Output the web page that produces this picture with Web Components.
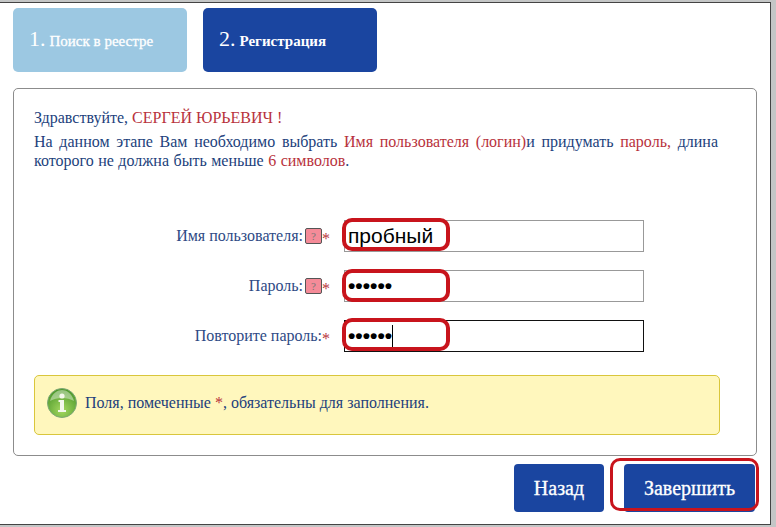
<!DOCTYPE html>
<html>
<head>
<meta charset="utf-8">
<style>
  html, body { margin: 0; height: 100%; background: #fff; overflow: hidden; }
  body { font-family: "Liberation Serif", serif; }
  reg-panel b, info-note b { font-weight: normal; color: #b8323c; }
</style>
</head>
<body>
<reg-window>
  <step-tabs slot="tabs">
    <step-tab num="1." label="Поиск в реестре" light></step-tab>
    <step-tab num="2." label="Регистрация"></step-tab>
  </step-tabs>
  <reg-panel slot="panel">
    <span slot="hello">Здравствуйте, <b>СЕРГЕЙ ЮРЬЕВИЧ !</b></span>
    <span slot="intro" class="fill">На данном этапе Вам необходимо выбрать <b>Имя пользователя (логин)</b>и придумать <b>пароль,</b> длина</span>
    <span slot="intro">которого не должна быть меньше <b>6 символов</b>.</span>
    <form-row slot="rows" label="Имя пользователя:" help value="пробный" marked></form-row>
    <form-row slot="rows" label="Пароль:" help value="••••••" dots marked style="--mark-top:-2px"></form-row>
    <form-row slot="rows" label="Повторите пароль:" value="••••••" dots focused marked></form-row>
    <info-note slot="note">Поля, помеченные <b>*</b>, обязательны для заполнения.</info-note>
  </reg-panel>
  <nav-button slot="nav" label="Назад" style="width:90px"></nav-button>
  <nav-button slot="nav" label="Завершить" marked style="width:131px"></nav-button>
</reg-window>

<script>
class RegWindow extends HTMLElement {
  constructor() {
    super();
    this.attachShadow({ mode: 'open' }).innerHTML = `
      <style>
        :host {
          display: block;
          box-sizing: border-box;
          width: 776px;
          height: 527px;
          padding: 2px 5px 2px 0;
          background: #c4c6c6;
        }
        .win {
          box-sizing: border-box;
          height: 100%;
          padding: 5px 0 0 13px;
          background: #fff;
          border: 1px solid #444;
          border-left: 0;
        }
        .nav { display: flex; justify-content: flex-end; gap: 20px; margin: 8px 15px 0 0; }
      </style>
      <div class="win">
        <slot name="tabs"></slot>
        <slot name="panel"></slot>
        <div class="nav"><slot name="nav"></slot></div>
      </div>`;
  }
}

class StepTabs extends HTMLElement {
  constructor() {
    super();
    this.attachShadow({ mode: 'open' }).innerHTML = `
      <style>:host { display: flex; gap: 16px; margin-bottom: 16px; }</style>
      <slot></slot>`;
  }
}

class StepTab extends HTMLElement {
  constructor() {
    super();
    this.attachShadow({ mode: 'open' }).innerHTML = `
      <style>
        :host {
          display: flex;
          align-items: baseline;
          box-sizing: border-box;
          width: 174px;
          height: 64px;
          padding: 18px 0 0 16px;
          border-radius: 5px;
          background: #1a45a0;
          color: #fff;
        }
        :host([light]) { background: #9cc8e2; }
        .num { font-size: 22px; margin-right: 4px; }
        .label { font-size: 15px; font-weight: bold; }
        :host([light]) .label { font-weight: normal; -webkit-text-stroke: .3px #fff; }
      </style>
      <span class="num">${this.getAttribute('num')}</span>
      <span class="label">${this.getAttribute('label')}</span>`;
  }
}

class RegPanel extends HTMLElement {
  constructor() {
    super();
    this.attachShadow({ mode: 'open' }).innerHTML = `
      <style>
        :host {
          display: block;
          box-sizing: border-box;
          width: 744px;
          height: 368px;
          border: 1px solid #8c8c8c;
          border-radius: 5px;
          padding: 19px 38px 0 20px;
          color: #223f7c;
          font-size: 16px;
        }
        .hello { line-height: 20px; margin-bottom: 4px; }
        .intro { line-height: 19px; word-spacing: .5px; margin-bottom: 50px; white-space: nowrap; }
        ::slotted(span) { display: block; }
        ::slotted(.fill) { white-space: normal; text-align: justify; text-align-last: justify; }
        .rows { display: flex; flex-direction: column; gap: 18px; margin-bottom: 23px; }
      </style>
      <div class="hello"><slot name="hello"></slot></div>
      <div class="intro"><slot name="intro"></slot></div>
      <div class="rows"><slot name="rows"></slot></div>
      <slot name="note"></slot>`;
  }
}

class FormRow extends HTMLElement {
  constructor() {
    super();
    const help = this.hasAttribute('help') ? '<span class="help">?</span>' : '';
    const caret = this.hasAttribute('focused') ? '<span class="caret"></span>' : '';
    this.attachShadow({ mode: 'open' }).innerHTML = `
      <style>
        :host { display: flex; align-items: center; height: 32px; }
        .label { width: 296px; display: flex; justify-content: flex-end; align-items: center; color: #2e4a85; }
        .help {
          box-sizing: border-box;
          width: 17px;
          height: 16px;
          margin-left: 2px;
          border: 1px solid #555;
          border-radius: 2px;
          background: #f58b98;
          color: #777;
          font-size: 11px;
          line-height: 14px;
          text-align: center;
        }
        .star { color: #b8323c; align-self: flex-start; margin-top: 5px; }
        .field {
          position: relative;
          box-sizing: border-box;
          width: 300px;
          height: 32px;
          margin-left: 14px;
          border: 1px solid #999;
          padding-left: 3px;
          color: #000;
          font-family: "Liberation Sans", sans-serif;
          font-size: 21px;
          line-height: 30px;
          white-space: nowrap;
        }
        :host([dots]) .field { font-weight: bold; }
        :host([focused]) .field { border-color: #111; }
        .caret { display: inline-block; width: 1px; height: 24px; background: #000; vertical-align: -6px; }
        .mark {
          position: absolute;
          left: -3px;
          top: var(--mark-top, -3px);
          box-sizing: border-box;
          width: 108px;
          height: 33px;
          border: 4px solid #c8141c;
          border-radius: 10px;
          display: none;
        }
        :host([marked]) .mark { display: block; }
      </style>
      <div class="label">${this.getAttribute('label')}${help}<span class="star">*</span></div>
      <div class="field">${this.getAttribute('value')}${caret}<div class="mark"></div></div>`;
  }
}

class InfoNote extends HTMLElement {
  constructor() {
    super();
    this.attachShadow({ mode: 'open' }).innerHTML = `
      <style>
        :host {
          display: flex;
          align-items: center;
          box-sizing: border-box;
          width: 686px;
          height: 60px;
          padding: 0 0 4px 12px;
          border: 1px solid #d9c63c;
          border-radius: 5px;
          background: #fff7bd;
          color: #223f7c;
          font-size: 16px;
        }
        svg { width: 30px; height: 30px; margin-right: 8px; flex: none; }
      </style>
      <svg viewBox="0 0 30 30">
        <defs>
          <radialGradient id="g" cx="50%" cy="75%" r="70%">
            <stop offset="0" stop-color="#a5d860"/>
            <stop offset="1" stop-color="#4f9a2c"/>
          </radialGradient>
        </defs>
        <circle cx="15" cy="15" r="14.500" fill="url(#g)" stroke="#7fa878"/>
        <path d="M3 13C5 5 11 2 15 2s10 3 12 11C20 9 10 9 3 13z" fill="#fff" opacity=".4"/>
        <circle cx="15" cy="8" r="2.600" fill="#f4f8ec"/>
        <path d="M11.500 12h5.500v10h2v2h-8v-2h2v-8h-1.500z" fill="#f4f8ec"/>
      </svg>
      <span><slot></slot></span>`;
  }
}

class NavButton extends HTMLElement {
  constructor() {
    super();
    this.attachShadow({ mode: 'open' }).innerHTML = `
      <style>
        :host {
          position: relative;
          display: flex;
          align-items: center;
          justify-content: center;
          box-sizing: border-box;
          height: 48px;
          border-radius: 4px;
          background: #1a45a0;
          color: #fff;
          font-size: 20px;
          -webkit-text-stroke: .3px #fff;
        }
        .mark {
          position: absolute;
          left: -14px;
          right: -4px;
          top: -6px;
          bottom: 1px;
          border: 3px solid #c8141c;
          border-radius: 10px;
          display: none;
        }
        :host([marked]) .mark { display: block; }
      </style>
      ${this.getAttribute('label')}<div class="mark"></div>`;
  }
}

customElements.define('reg-window', RegWindow);
customElements.define('step-tabs', StepTabs);
customElements.define('step-tab', StepTab);
customElements.define('reg-panel', RegPanel);
customElements.define('form-row', FormRow);
customElements.define('info-note', InfoNote);
customElements.define('nav-button', NavButton);
</script>
</body>
</html>
